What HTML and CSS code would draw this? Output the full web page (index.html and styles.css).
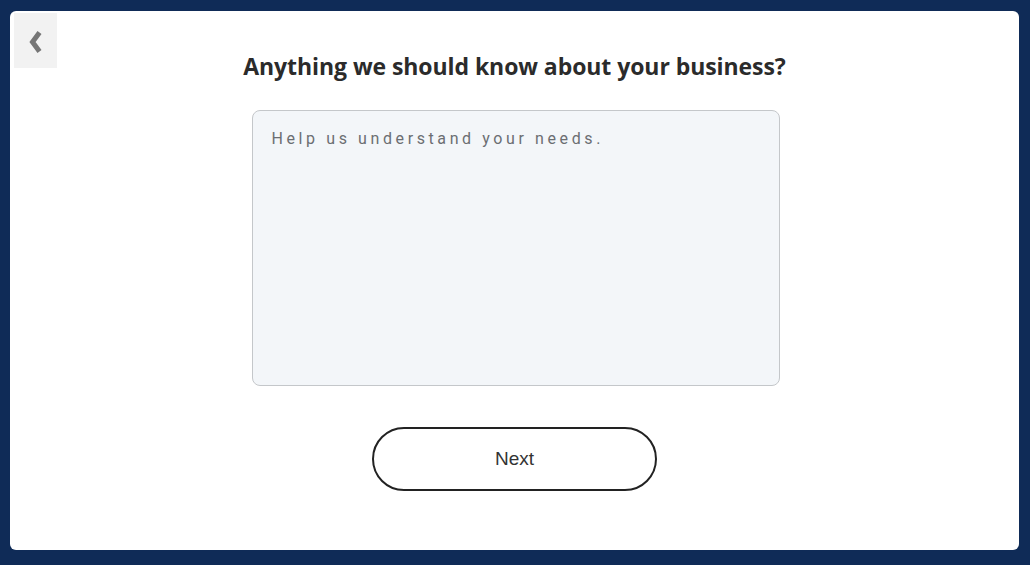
FILE: index.html
```html
<!DOCTYPE html>
<html lang="en">
<head>
<meta charset="utf-8">
<title>Business details</title>
<link rel="stylesheet" href="styles.css">
</head>
<body>
<div class="frame">
  <main class="card">
    <button class="back" type="button" aria-label="Back">
      <svg width="14" height="22" viewBox="0 0 14 22"><path d="M11.5 1.5 L4.5 11 L11.5 20.5" fill="none" stroke="#767676" stroke-width="5" stroke-linejoin="miter"/></svg>
    </button>
    <div class="content">
      <h1 class="title">Anything we should know about your business?</h1>
      <textarea class="notes" placeholder="Help us understand your needs."></textarea>
      <button class="next" type="button">Next</button>
    </div>
  </main>
</div>
</body>
</html>
```

FILE: styles.css
```css
* { box-sizing: border-box; }
html, body { margin: 0; padding: 0; }
body {
  width: 1030px;
  height: 565px;
  background: #0f2b57;
  overflow: hidden;
}
.frame {
  padding: 11px 11px 15px 10px;
  height: 565px;
}
.card {
  position: relative;
  background: #fff;
  border-radius: 6px;
  height: 539px;
  width: 1009px;
}
.back {
  position: absolute;
  left: 4px;
  top: 2px;
  width: 43px;
  height: 55px;
  background: #f2f2f2;
  border: 0;
  padding: 0;
  display: flex;
  align-items: center;
  justify-content: center;
}
.back svg { margin-left: -1px; margin-top: 3px; }
.content {
  display: flex;
  flex-direction: column;
  align-items: center;
  padding-top: 40px;
}
.title {
  margin: 0;
  font-family: "Open Sans", "Noto Sans", sans-serif;
  font-weight: 700;
  font-size: 23px;
  line-height: 30px;
  letter-spacing: -0.07px;
  color: #2b2b2b;
}
.notes {
  margin-top: 29px;
  margin-left: 2px;
  width: 528px;
  height: 276px;
  background: #f3f6f9;
  border: 1px solid #c4c7ca;
  border-radius: 8px;
  padding: 18px 19px;
  resize: none;
  font-family: Roboto, sans-serif;
  font-size: 16px;
  letter-spacing: 3.6px;
  color: #333;
}
.notes::placeholder { color: #6b6e72; opacity: 1; }
.next {
  margin-top: 41px;
  width: 285px;
  height: 64px;
  background: #fff;
  border: 2px solid #222;
  border-radius: 32px;
  font-family: "Liberation Sans", Arial, sans-serif;
  font-size: 19px;
  color: #333;
}
```
